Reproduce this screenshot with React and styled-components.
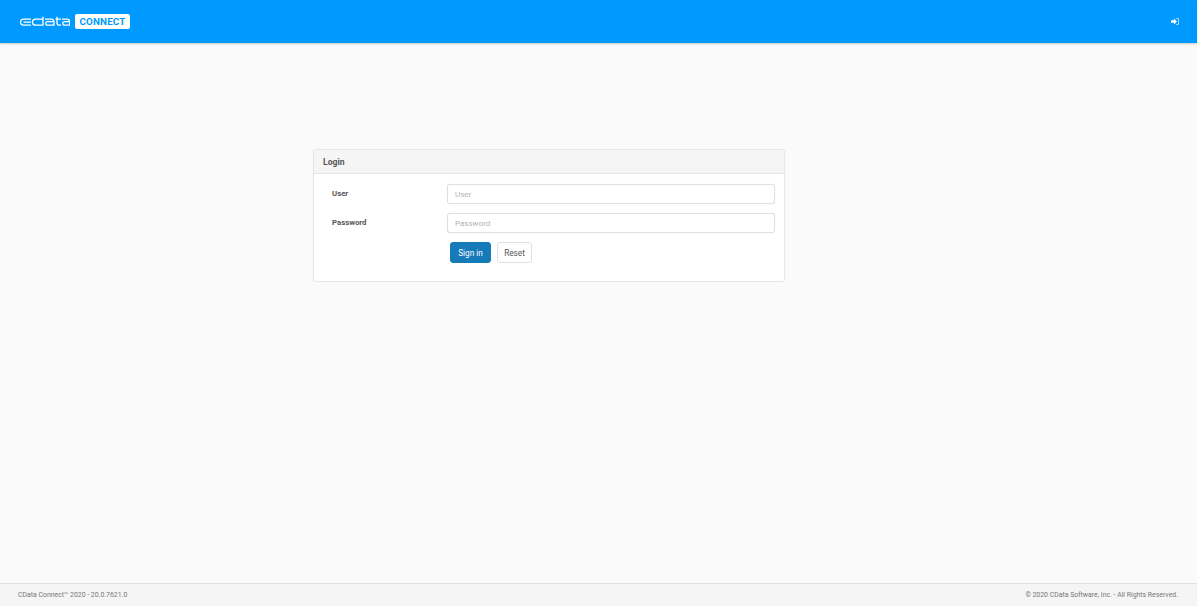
import React from 'react';
import styled, { createGlobalStyle } from 'styled-components';

const GlobalStyle = createGlobalStyle`
    html, body {
        margin: 0;
        padding: 0;
        height: 100%;
        background: #ffffff;
    }
    #root {
        height: 100%;
    }
`;

const Page = styled.div`
    width: 1197px;
    height: 606px;
    display: flex;
    flex-direction: column;
    background: #fafafa;
    font-family: Roboto, "Open Sans", sans-serif;
    color: #555555;
`;

const Header = styled.header`
    height: 43px;
    flex: none;
    display: flex;
    align-items: center;
    justify-content: space-between;
    padding: 0 18px 0 20px;
    background: #0099ff;
    box-shadow: 0 1px 2px rgba(0, 0, 0, 0.2);
`;

const Brand = styled.div`
    display: flex;
    align-items: center;
    gap: 5px;
`;

const Badge = styled.span`
    height: 15px;
    width: 55px;
    display: flex;
    align-items: center;
    justify-content: center;
    background: #ffffff;
    border-radius: 2px;
    color: #0099ff;
    font-size: 9.8px;
    font-weight: 700;
    letter-spacing: 0.2px;
`;

const Main = styled.main`
    flex: 1;
    display: flex;
    justify-content: flex-start;
    padding: 106px 0 0 313px;
`;

const Panel = styled.section`
    width: 470px;
    height: 131px;
    background: #ffffff;
    border: 1px solid #e7e7e7;
    border-radius: 3px;
    box-shadow: 0 0 1px rgba(0, 0, 0, 0.08);
`;

const PanelHeading = styled.div`
    height: 23px;
    padding-left: 9px;
    display: flex;
    align-items: center;
    background: #f5f5f5;
    border-bottom: 1px solid #e7e7e7;
    font-size: 8.6px;
    font-weight: 700;
    color: #555555;
`;

const PanelBody = styled.div`
    padding: 10px 9px 0 18px;
    display: flex;
    flex-direction: column;
    gap: 9px;
`;

const Row = styled.div`
    display: grid;
    grid-template-columns: 115px 1fr;
    align-items: center;
`;

const Label = styled.label`
    padding-bottom: 1px;
    font-size: 7.8px;
    font-weight: 700;
    color: #555555;
`;

const Input = styled.input`
    box-sizing: border-box;
    width: 100%;
    height: 20px;
    padding: 1px 7px 0;
    background: #ffffff;
    border: 1px solid #e0e0e0;
    border-radius: 3px;
    box-shadow: 0 0 1px rgba(0, 0, 0, 0.12);
    font-family: inherit;
    font-size: 8px;
    outline: none;

    &::placeholder {
        color: #b4b4b4;
        opacity: 1;
    }
`;

const Actions = styled.div`
    grid-column: 2;
    display: flex;
    gap: 6px;
    padding-left: 3px;
`;

const Button = styled.button`
    height: 21px;
    width: ${props => props.$width}px;
    padding: 0;
    border-radius: 3px;
    border: 1px solid ${props => (props.$primary ? '#167ab8' : '#e0e0e0')};
    background: ${props => (props.$primary ? '#167ab8' : '#ffffff')};
    color: ${props => (props.$primary ? '#ffffff' : '#555555')};
    font-family: inherit;
    font-size: 8.2px;
`;

const Footer = styled.footer`
    height: 22px;
    flex: none;
    display: flex;
    align-items: center;
    justify-content: space-between;
    padding: 0 19px 0 18px;
    background: #f5f5f5;
    border-top: 1px solid #e2e2e2;
    font-size: 6.9px;
    color: #777777;
`;

const IconButton = styled.span`
    display: flex;
    color: #ffffff;
`;

// outlined cdata wordmark
const Logo = () => (
    <svg width="50" height="11" viewBox="0 0 50 11" fill="none" stroke="#ffffff" strokeWidth="1.3">
        <path d="M11 3.2H3.5a3 3 0 0 0 0 6H11M3.5 6.2H11" />
        <path d="M23 .7v8.5h-7.5a3 3 0 0 1 0-6H23" />
        <path d="M25 3.2h6.5A2.5 2.5 0 0 1 34 5.7v3.5h-6.5a1.75 1.75 0 0 1 0-3.5H34" />
        <path d="M37 .7v6a2.5 2.5 0 0 0 2.5 2.5H41M35.5 3.2H41" />
        <path d="M42 3.2h5.2a2.5 2.5 0 0 1 2.5 2.5v3.5h-5.2a1.75 1.75 0 0 1 0-3.5h5.2" />
    </svg>
);

const LoginIcon = () => (
    <svg width="8" height="7" viewBox="0 0 8 7" fill="currentColor">
        <path d="M0 2.3h3V.6l2.9 2.9L3 6.4V4.7H0z" />
        <path opacity="0.65" d="M5.2 0H7a1 1 0 0 1 1 1v5a1 1 0 0 1-1 1H5.2V6H7V1H5.2z" />
    </svg>
);

const App = () => {
    return (
        <Page>
            <GlobalStyle />
            <Header>
                <Brand>
                    <Logo />
                    <Badge>CONNECT</Badge>
                </Brand>
                <IconButton>
                    <LoginIcon />
                </IconButton>
            </Header>
            <Main>
                <Panel>
                    <PanelHeading>Login</PanelHeading>
                    <PanelBody>
                        <Row>
                            <Label>User</Label>
                            <Input placeholder="User" />
                        </Row>
                        <Row>
                            <Label>Password</Label>
                            <Input type="password" placeholder="Password" />
                        </Row>
                        <Row>
                            <Actions>
                                <Button $primary $width={41}>Sign in</Button>
                                <Button $width={35}>Reset</Button>
                            </Actions>
                        </Row>
                    </PanelBody>
                </Panel>
            </Main>
            <Footer>
                <span>CData Connect™ 2020 - 20.0.7621.0</span>
                <span>© 2020 CData Software, Inc. - All Rights Reserved.</span>
            </Footer>
        </Page>
    );
};

export default App;
